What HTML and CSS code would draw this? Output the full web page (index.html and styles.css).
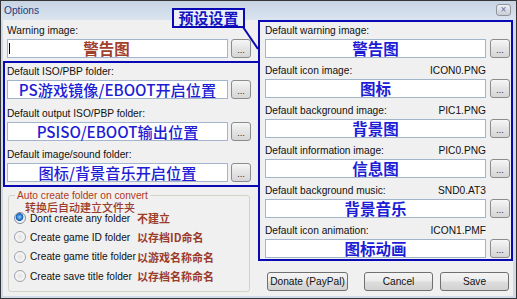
FILE: index.html
```html
<!DOCTYPE html>
<html>
<head>
<meta charset="utf-8">
<link rel="stylesheet" href="styles.css">
</head>
<body>
<div class="window">
  <div class="titlebar">
    <span class="title">Options</span>
    <span class="close">×</span>
  </div>
  <div class="client">
    <div class="col-left">
      <div class="warn">
        <div class="label">Warning image:</div>
        <div class="row"><div class="input red"><span class="caret"></span>警告图</div><div class="dots">...</div></div>
      </div>
      <div class="group-left">
        <div class="field">
          <div class="label">Default ISO/PBP folder:</div>
          <div class="row"><div class="input blue">PS游戏镜像/EBOOT开启位置</div><div class="dots">...</div></div>
        </div>
        <div class="field">
          <div class="label">Default output ISO/PBP folder:</div>
          <div class="row"><div class="input blue">PSISO/EBOOT输出位置</div><div class="dots">...</div></div>
        </div>
        <div class="field">
          <div class="label">Default image/sound folder:</div>
          <div class="row"><div class="input blue">图标/背景音乐开启位置</div><div class="dots">...</div></div>
        </div>
      </div>
      <fieldset class="auto">
        <legend>Auto create folder on convert</legend>
        <div class="note">转换后自动建立文件夹</div>
        <div class="radio"><span class="dot on"></span><span class="rtext">Dont create any folder</span><span class="cn">不建立</span></div>
        <div class="radio"><span class="dot"></span><span class="rtext">Create game ID folder</span><span class="cn">以存档ID命名</span></div>
        <div class="radio"><span class="dot"></span><span class="rtext">Create game title folder</span><span class="cn">以游戏名称命名</span></div>
        <div class="radio"><span class="dot"></span><span class="rtext">Create save title folder</span><span class="cn">以存档名称命名</span></div>
      </fieldset>
    </div>
    <div class="col-right">
      <div class="group-right">
        <div class="field">
          <div class="label lrow"><span>Default warning image:</span><span></span></div>
          <div class="row"><div class="input blue bold">警告图</div><div class="dots">...</div></div>
        </div>
        <div class="field">
          <div class="label lrow"><span>Default icon image:</span><span>ICON0.PNG</span></div>
          <div class="row"><div class="input blue bold">图标</div><div class="dots">...</div></div>
        </div>
        <div class="field">
          <div class="label lrow"><span>Default background image:</span><span>PIC1.PNG</span></div>
          <div class="row"><div class="input blue bold">背景图</div><div class="dots">...</div></div>
        </div>
        <div class="field">
          <div class="label lrow"><span>Default information image:</span><span>PIC0.PNG</span></div>
          <div class="row"><div class="input blue bold">信息图</div><div class="dots">...</div></div>
        </div>
        <div class="field">
          <div class="label lrow"><span>Default background music:</span><span>SND0.AT3</span></div>
          <div class="row"><div class="input blue bold">背景音乐</div><div class="dots">...</div></div>
        </div>
        <div class="field">
          <div class="label lrow"><span>Default icon animation:</span><span>ICON1.PMF</span></div>
          <div class="row"><div class="input blue bold">图标动画</div><div class="dots">...</div></div>
        </div>
      </div>
      <div class="buttons">
        <div class="btn donate">Donate (PayPal)</div>
        <div class="btn cancel">Cancel</div>
        <div class="btn save">Save</div>
      </div>
    </div>
  </div>
  <svg class="connector" width="517" height="70" viewBox="0 0 517 70"><line x1="242" y1="26" x2="257" y2="48" stroke="#0a0ab4" stroke-width="2"/></svg>
  <div class="tag">预设设置</div>
</div>
</body>
</html>
```
FILE: styles.css
```css
* { box-sizing: border-box; }
html, body { margin: 0; padding: 0; }
body {
  width: 517px; height: 299px; overflow: hidden;
  font-family: "Liberation Sans", Arial, sans-serif;
  font-size: 10.2px; color: #111; background: #333;
}
.window {
  position: relative;
  width: 517px; height: 299px;
  border: 1px solid #353535;
  background: #cfdbe9;
  display: flex; flex-direction: column;
}
.titlebar {
  height: 19px; flex: none;
  display: flex; align-items: center; justify-content: space-between;
  padding: 0 5px 0 3px;
  background: linear-gradient(#c6d3e3, #dbe5f0);
}
.title { color: #1d3b80; line-height: 12px; margin-top: 1px; }
.close {
  width: 15px; height: 12px; margin-top: -2px;
  border: 1px solid #8e959e; border-radius: 3px;
  background: linear-gradient(#eef0f3, #c8ced6);
  color: #5d6aa6; font-size: 10px; line-height: 9px; text-align: center;
}
.client {
  flex: 1; display: flex;
  background: #f0f0f0;
  margin: 0 3px 2px 2px;
}
.col-left { width: 257px; flex: none; display: flex; flex-direction: column; }
.warn { height: 41px; padding: 2px 0 0 4px; }
.label { line-height: 17px; height: 17px; white-space: nowrap; }
.lrow { width: 221px; display: flex; justify-content: space-between; }
.row { display: flex; gap: 3px; }
.input {
  position: relative;
  width: 221px; height: 19px;
  border: 1px solid #a2b5cb; background: #fff;
  display: flex; align-items: center; justify-content: center;
  font-family: "Noto Sans CJK SC", "Liberation Sans", sans-serif;
  font-size: 15.2px; line-height: 17px; white-space: nowrap;
}
.input.red { color: #a2402e; font-weight: 700; font-size: 15.5px; padding-right: 22px; }
.input.blue { color: #1d1dd6; font-weight: 500; }
.input.bold { font-weight: 700; font-size: 15.5px; }
.caret { position: absolute; left: 1px; top: 3px; width: 1px; height: 11px; background: #000; }
.dots {
  width: 20px; height: 19px;
  border: 1px solid #8a8c8e; border-radius: 3px;
  background: linear-gradient(#f6f6f6, #e4e4e4 50%, #d6d6d6);
  font-size: 9px; line-height: 9px; text-align: center; padding-top: 6px;
  color: #222;
}
.group-left {
  border: 2px solid #0a0ab4;
  padding: 0 0 3px 2px;
  display: flex; flex-direction: column; gap: 5.5px;
}
.auto {
  margin: 3px 0 0 5px; padding: 0 0 5px 0;
  width: 242px; min-inline-size: 0;
  border: 1px solid #d3d3c6; border-radius: 3px;
}
.auto legend {
  margin-left: 6px; padding: 0 2px;
  color: #b0381a; line-height: 11px;
}
.note {
  margin-left: 16px; margin-top: 1px; line-height: 10px; height: 10px;
  font-family: "Noto Sans CJK SC", sans-serif; font-size: 11px; color: #9b3b2b; font-weight: 500;
  white-space: nowrap;
}
.radio {
  display: grid; grid-template-columns: 12px 103px auto; column-gap: 4px;
  align-items: center; height: 19.3px; padding-left: 5px;
}
.note + .radio { margin-top: -3.5px; }
.dot {
  width: 12px; height: 12px; border-radius: 50%;
  border: 1px solid #9aa1a8;
  background: radial-gradient(circle at 50% 50%, #e2e2e2 0, #f4f4f4 4px, #fdfdfd 6px);
}
.dot.on {
  border-color: #7f8f9f;
  background: radial-gradient(circle at 45% 40%, #8fd0ff 0, #2a7fd0 2.5px, #1b5da8 3.6px, #eaeaea 4.2px, #fbfbfb 6px);
}
.rtext { white-space: nowrap; font-size: 10.2px; }
.cn {
  font-family: "Noto Sans CJK SC", sans-serif; font-size: 11px; font-weight: 700;
  color: #9b3b2b; white-space: nowrap; line-height: 12px;
}
.col-right { width: 255px; flex: none; margin-left: -2px; display: flex; flex-direction: column; }
.group-right {
  border: 2px solid #0a0ab4;
  padding: 0 1px 1px 5px;
  display: flex; flex-direction: column; gap: 4px;
}
.group-right .row { gap: 4px; }
.buttons { display: flex; margin-top: 11px; }
.btn {
  height: 19px;
  border: 1px solid #707070; border-radius: 3px;
  background: linear-gradient(#f4f4f4, #ebebeb 48%, #dddddd 52%, #d2d2d2);
  text-align: center; line-height: 17px; color: #111;
}
.donate { width: 81px; margin-left: 9px; }
.cancel { width: 69px; margin-left: 16px; }
.save { width: 69px; margin-left: 7px; }
.connector { position: absolute; left: 0; top: 0; }
.tag {
  position: absolute; left: 171px; top: 7px;
  width: 73px; height: 20px;
  border: 2px solid #0a0ab4; background: #edf1f7;
  font-family: "Noto Sans CJK SC", sans-serif; font-weight: 700; font-size: 15px;
  color: #1414c4; text-align: center; line-height: 16px;
}
```
